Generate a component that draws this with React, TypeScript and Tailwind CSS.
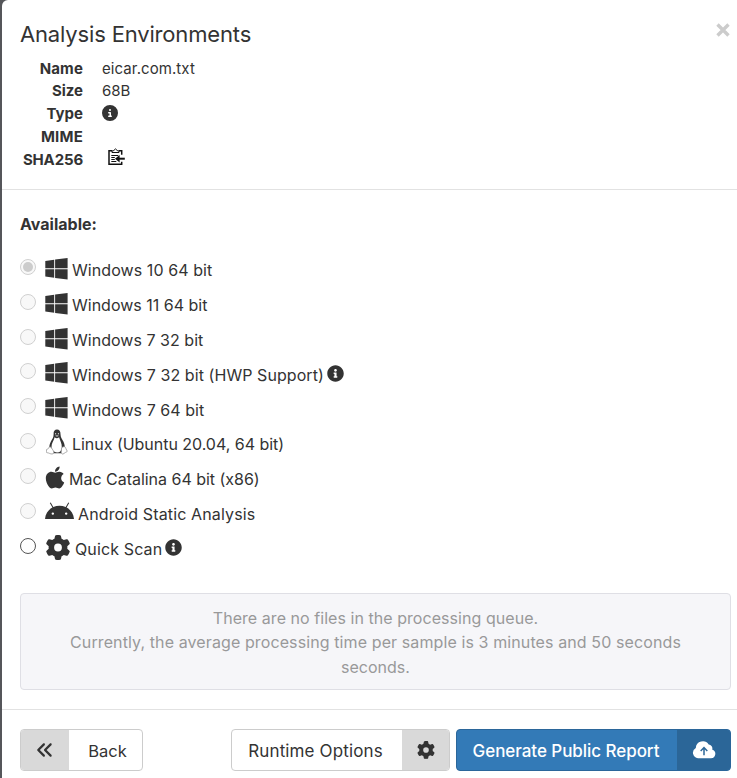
import type { ReactNode } from "react";
import { FaAndroid, FaAnglesLeft, FaApple, FaCircleInfo, FaGear } from "react-icons/fa6";
import { FaInfoCircle } from "react-icons/fa";

type Environment = {
  label: string;
  icon: ReactNode;
  textClass: string;
  checked?: boolean;
  enabled?: boolean;
  info?: boolean;
};

function WindowsLogo() {
  return (
    <svg viewBox="0 0 23 22" className="mt-[2px] mr-[4px] h-[22px] w-[23px] shrink-0" fill="#333">
      <path d="M.3 3.1 9.2 1.8v8.4H.3ZM10.1 1.6 22.6 0v10.2H10.1ZM.3 11.2h8.9v8.5L.3 18.5ZM10.1 11.2h12.5V21.6l-12.5-1.7Z" />
    </svg>
  );
}

function Tux() {
  return (
    <svg viewBox="0 0 22 26" className="h-[26px] w-[22px] shrink-0">
      <path d="M7.6 5.2C7.4 2 8.8.5 11 .5s3.7 1.6 3.5 4.7c0 3.3 1.7 4.7 3 7.6 1.2 2.7 1.6 5 .8 7.2l-3 4.2H7L3.6 19.6c-.7-2.2.2-4.7 1.3-7 1.3-2.7 2.8-4.2 2.7-7.4Z" fill="#333" />
      <path d="M8.6 8.2c1.5 1.4 3.1 1.2 4.5 0 .7 3 3 6 2.7 10-.1 3.5-1.8 5.2-4.7 5.2s-5.4-2.3-5.6-5.2c-.2-3.7 2.4-6.8 3.1-10Z" fill="#fff" />
      <ellipse cx="9.6" cy="4.7" rx=".6" ry=".8" fill="#ddd" />
      <ellipse cx="12.4" cy="4.7" rx=".6" ry=".8" fill="#ddd" />
      <path d="m9 6.8 2-1 2 1-2 1.3Z" fill="#999" />
      <path d="M4 17.7c1.3.4 2.4 2.7 3.4 4.1.9 1.5.5 3.1-1.3 3.2-1.7.1-3.2-1.2-5-1.3-1.3-.2-.5-1.4-.6-2.7-.1-1.2 1.5-.6 2.2-1.8.4-.6.3-1.4 1.3-1.5Zm14 0c-1.7-.1-2.5 1-2.6 3-.1 1.6-.4 2.8 0 3.7.8 1.2 2.4.4 3.4-.5 1-.9 2.6-1 2.5-1.8-.1-.9-1.3-1.2-1.4-2.5-.1-1-.6-1.8-1.9-1.9Z" fill="#fff" stroke="#888" strokeWidth=".7" />
    </svg>
  );
}

function PasteIcon() {
  return (
    <svg viewBox="0 0 17 18" className="h-[18px] w-[17px]" fill="none" stroke="#111" strokeWidth="1.5">
      <path d="M4 2.8H1v13.5h12.7v-2.5M11 2.8h2.7v4" />
      <path d="M4 4.5h7V3L9.2 2.5 7.5.9 5.8 2.5 4 3Z" strokeWidth="1" />
      <path d="M3.3 7.5h7M3.3 9.5h3.5M3.3 11.5h3.5M3.3 13.5h5" strokeWidth="1" />
      <path d="M16.8 10.7H9" strokeWidth="2" />
      <path d="m7 10.7 4.6-3.8v7.6Z" fill="#111" stroke="none" />
    </svg>
  );
}

function CloudUpload() {
  return (
    <svg viewBox="0 0 24 18" className="h-[18px] w-[24px]">
      <path d="M6 17.2a5.5 5.5 0 0 1-2.2-10.3A7 7 0 0 1 16.7 3.6a4.6 4.6 0 0 1 3.6 5.2 4.3 4.3 0 0 1-1.3 8.4Z" fill="#fff" />
      <path d="M12 14.3V7.2M8.7 10 12 6.6l3.3 3.4" fill="none" stroke="#2b6698" strokeWidth="1.5" />
    </svg>
  );
}

const environments: Environment[] = [
  { label: "Windows 10 64 bit", icon: <WindowsLogo />, textClass: "pt-[2px] tracking-[0.08px]", checked: true },
  { label: "Windows 11 64 bit", icon: <WindowsLogo />, textClass: "pt-[2px] tracking-[0px]" },
  { label: "Windows 7 32 bit", icon: <WindowsLogo />, textClass: "pt-[2px] tracking-[0.03px]" },
  { label: "Windows 7 32 bit (HWP Support)", icon: <WindowsLogo />, textClass: "pt-[2px] tracking-[0.07px]", info: true },
  { label: "Windows 7 64 bit", icon: <WindowsLogo />, textClass: "pt-[2px] tracking-[0.05px]" },
  { label: "Linux (Ubuntu 20.04, 64 bit)", icon: <span className="mr-[4px] w-[23px] pl-px"><Tux /></span>, textClass: "tracking-[-0.03px]" },
  { label: "Mac Catalina 64 bit (x86)", icon: <FaApple className="mt-[2px] mr-[4px] h-[25px] w-[20px] shrink-0" />, textClass: "pt-[2px] tracking-[-0.02px]" },
  { label: "Android Static Analysis", icon: <FaAndroid className="mt-[1px] mr-[4px] h-[29px] w-[29px] shrink-0" />, textClass: "pt-[2px] tracking-[0.13px]" },
  { label: "Quick Scan", icon: <FaGear className="mt-[2px] mr-[4px] h-[25px] w-[26px] shrink-0" />, textClass: "pt-[2px] tracking-[0.13px]", enabled: true, info: true },
];

function Radio({ checked, enabled }: { checked?: boolean; enabled?: boolean }) {
  return (
    <span
      className={`mb-[5px] flex size-[16px] shrink-0 items-center justify-center rounded-full border ${
        enabled ? "border-[#555] bg-white" : "border-[#d0d0d0] bg-[#f8f8f8]"
      }`}
    >
      {checked && <span className="size-[10px] rounded-full bg-[#ccc]" />}
    </span>
  );
}

export default function App() {
  return (
    <div className="h-[778px] w-[737px] overflow-hidden bg-[#55565a] pl-[2px] font-['Inter','Liberation_Sans',sans-serif] text-base text-[#333]">
      <div className="flex h-full flex-col rounded-tl-[6px] bg-white">
        <header className="flex h-[190px] shrink-0 justify-between border-b border-[#e2e2e2] pt-[22px] pl-[18px]">
          <div>
            <h1 className="h-[36px] text-[22px] leading-[25px] whitespace-nowrap">
              <span className="tracking-[-0.16px]">Analysis Environments</span>
            </h1>
            <dl className="grid grid-cols-[63px_auto] grid-rows-[22px_23px_23px_23px_23px] gap-x-[19px] text-[15px] leading-[22.75px] whitespace-nowrap">
              <dt className="text-right font-bold tracking-[0.15px]">Name</dt>
              <dd className="tracking-[0.08px]">eicar.com.txt</dd>
              <dt className="text-right font-bold">Size</dt>
              <dd>68B</dd>
              <dt className="text-right font-bold">Type</dt>
              <dd className="pt-[2px]"><FaCircleInfo className="size-[16px]" /></dd>
              <dt className="text-right font-bold tracking-[0.2px]">MIME</dt>
              <dd />
              <dt className="text-right font-bold tracking-[-0.15px]">SHA256</dt>
              <dd className="-mt-px pl-[6px]"><PasteIcon /></dd>
            </dl>
          </div>
          <svg viewBox="0 0 14 14" className="mt-[1px] mr-[7px] size-[14px]" stroke="#ccc" strokeWidth="3.4">
            <path d="m1.5 1.5 11 11m0-11-11 11" />
          </svg>
        </header>

        <main className="flex h-[519px] shrink-0 flex-col pr-[6px] pl-[18px]">
          <h2 className="mt-[23px] h-[39px] text-base leading-[22px] font-bold">
            <span className="tracking-[0px]">Available:</span>
          </h2>
          <div>
            {environments.map((env) => (
              <label key={env.label} className="flex h-[34.85px] items-center whitespace-nowrap">
                <Radio checked={env.checked} enabled={env.enabled} />
                <span className="w-[9px] shrink-0" />
                <span className="mb-[3px] flex">{env.icon}</span>
                <span className={`leading-[24px] ${env.textClass}`}>{env.label}</span>
                {env.info && <FaInfoCircle className="mb-[1px] ml-[3px] size-[17px]" />}
              </label>
            ))}
          </div>
          <div className="mt-auto mb-[19px] h-[97px] rounded-[4px] border border-[#dfdfe5] bg-[#f6f6f9] pt-[12px] text-center leading-[24.4px] whitespace-nowrap text-[#999]">
            <p className="tracking-[0.05px]">There are no files in the processing queue.</p>
            <p className="tracking-[0.105px]">Currently, the average processing time per sample is 3 minutes and 50 seconds</p>
            <p className="tracking-[0px]">seconds.</p>
          </div>
        </main>

        <footer className="flex h-[69px] shrink-0 border-t border-[#e2e2e2] pt-[19px] pr-[6px] pl-[18px] whitespace-nowrap">
          <button className="flex h-[42px] w-[123px] overflow-hidden rounded-[4px] border border-[#ccc]">
            <span className="flex h-full w-[48px] items-center justify-center bg-[#d9d9d9]"><FaAnglesLeft className="size-[18px]" /></span>
            <span className="flex h-full flex-1 items-center justify-center pt-[2px] pl-[4px] text-[16.5px]">Back</span>
          </button>
          <button className="ml-auto flex h-[42px] w-[219px] overflow-hidden rounded-[4px] border border-[#ccc]">
            <span className="flex h-full flex-1 items-center justify-center pt-[4px] pr-[3px] text-[17px] tracking-[0.13px]">Runtime Options</span>
            <span className="flex h-full w-[47px] items-center justify-center bg-[#d9d9d9]"><FaGear className="size-[18px]" /></span>
          </button>
          <button className="ml-[6px] flex h-[42px] w-[275px] overflow-hidden rounded-[4px] border border-[#2b669a] bg-[#337ab7] text-white">
            <span className="flex h-full flex-1 items-center justify-center pt-[4px] pr-[2px] text-[17px] font-medium tracking-[-0.05px]">Generate Public Report</span>
            <span className="flex h-full w-[53px] items-center justify-center bg-[#2b6698]"><CloudUpload /></span>
          </button>
        </footer>
      </div>
    </div>
  );
}
